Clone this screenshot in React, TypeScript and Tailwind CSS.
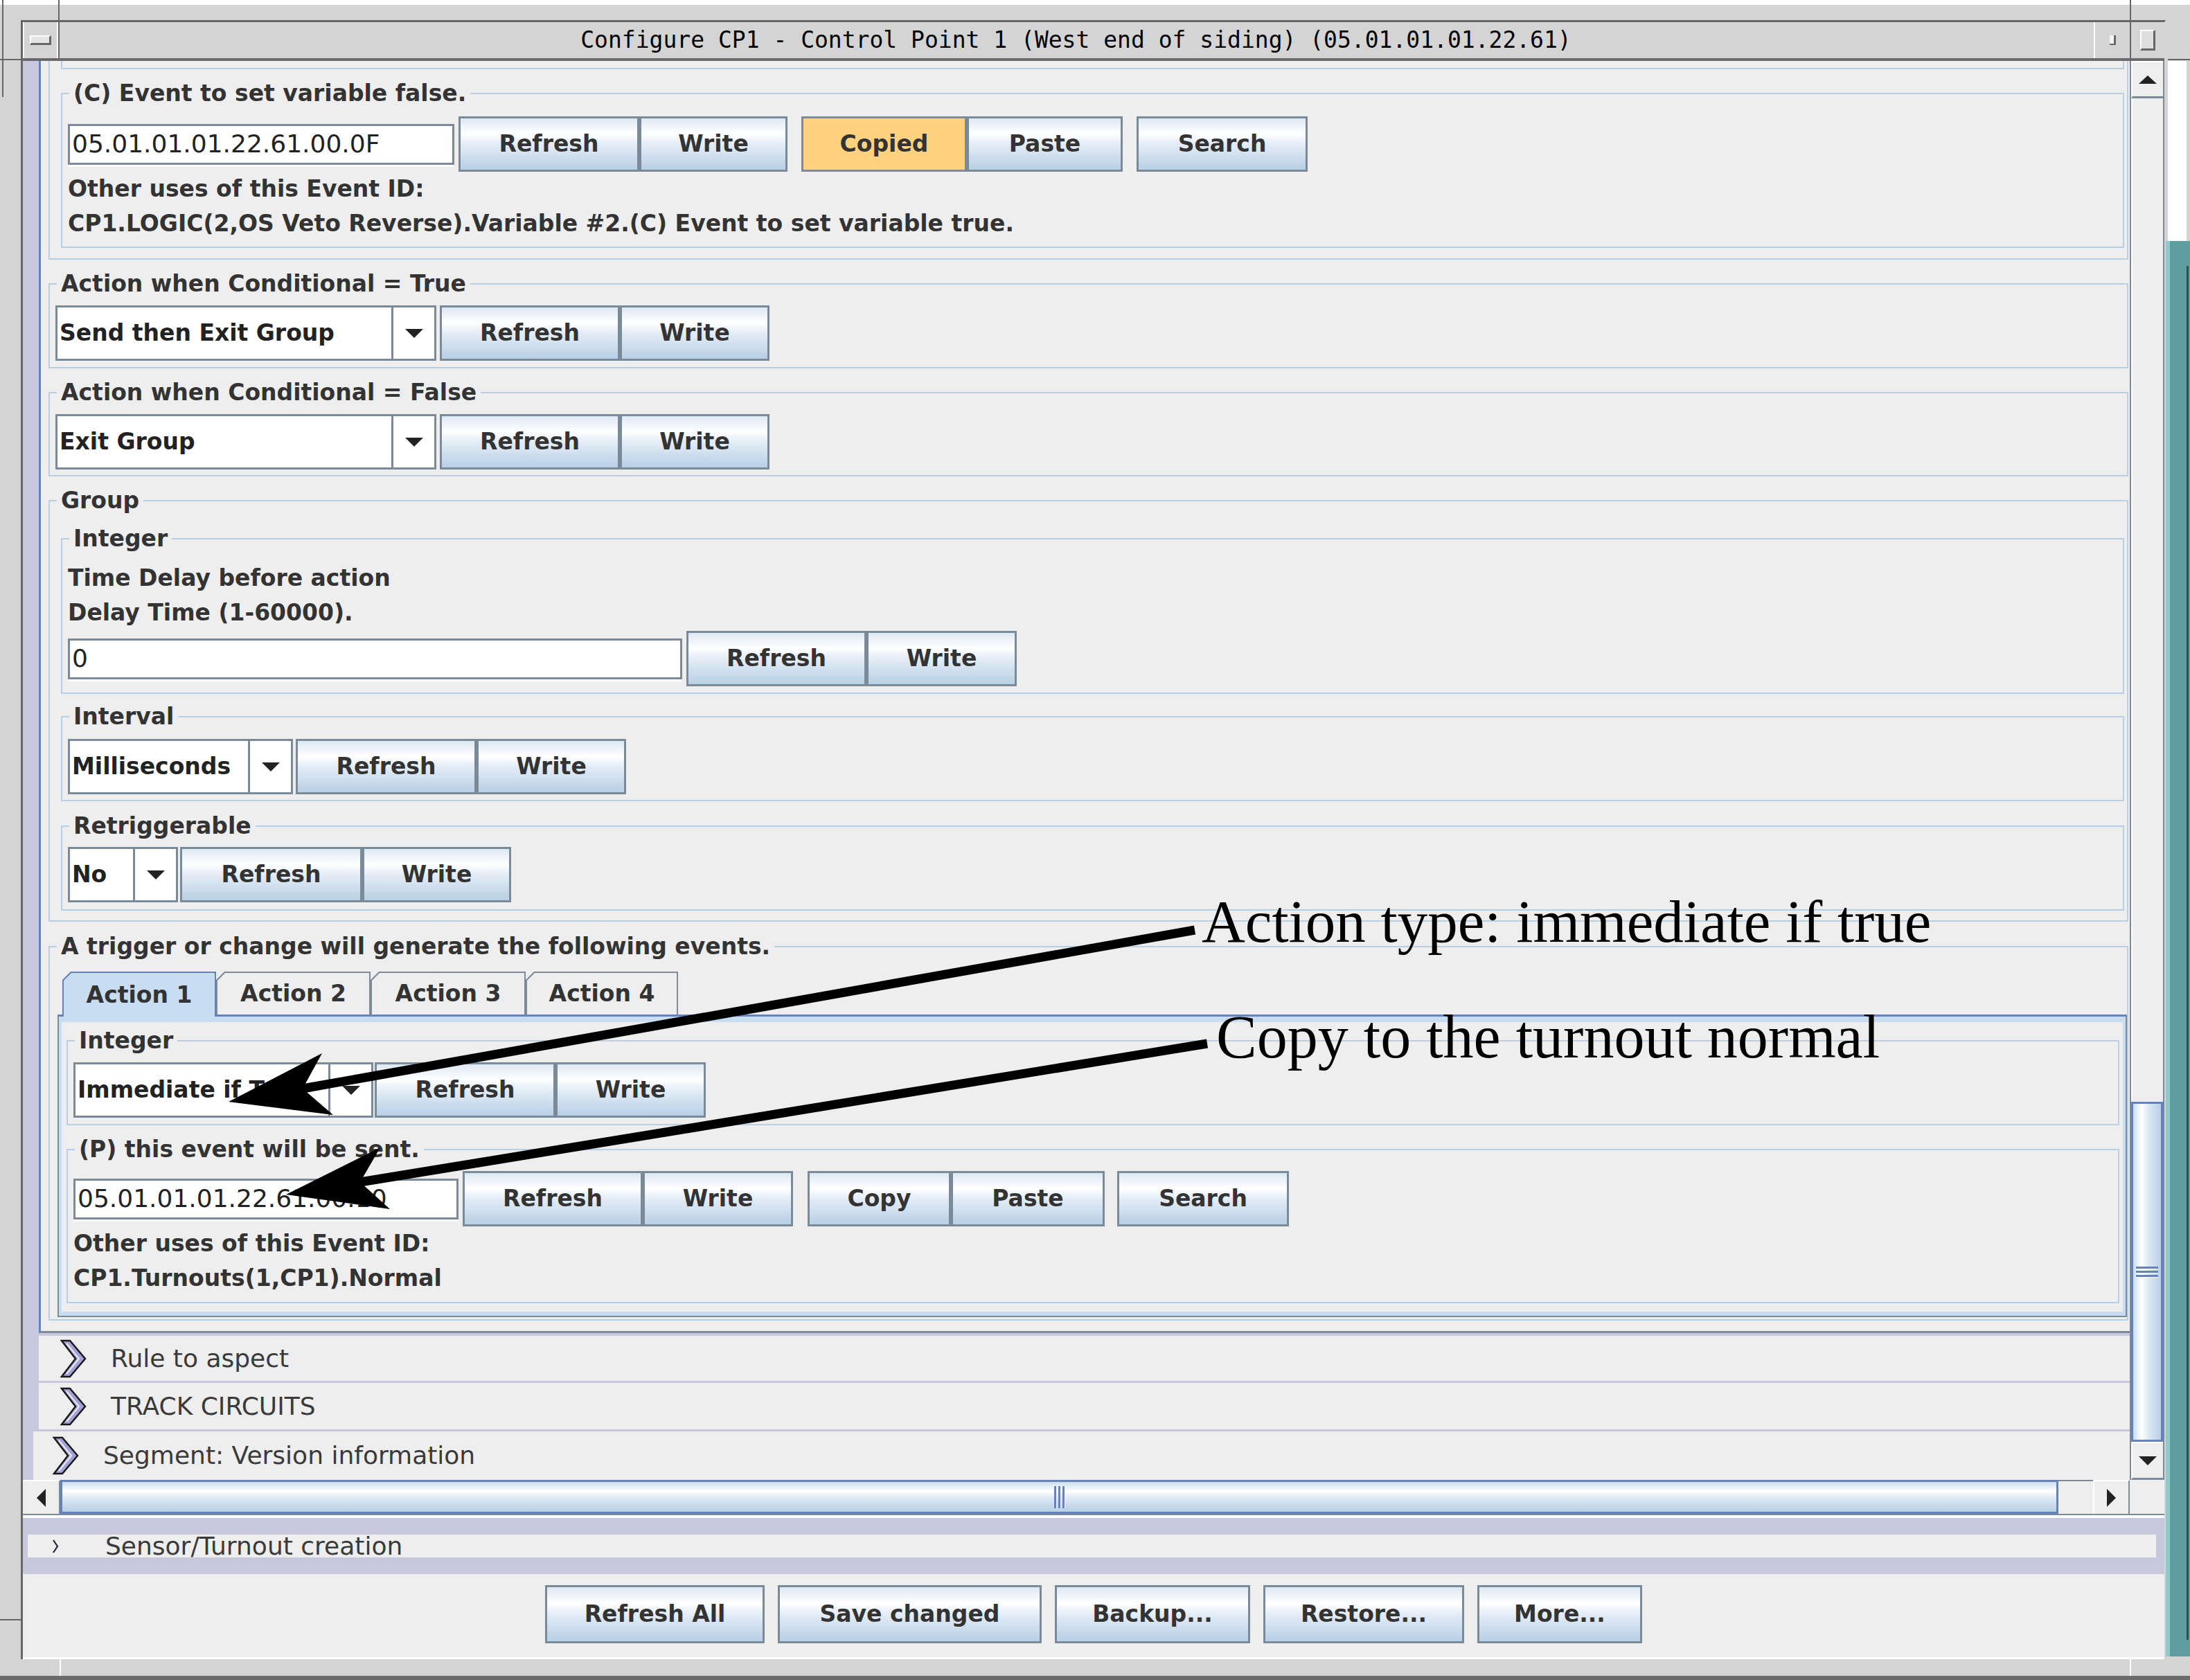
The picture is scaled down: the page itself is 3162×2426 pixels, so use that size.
import React from 'react';

// Ocean (Metal) look: gradient buttons, light blue titled borders
const BTN = 'bg-[linear-gradient(to_bottom,#dde8f3_0%,#ffffff_30%,#e6eef7_48%,#b8cfe5_100%)]';

type BtnProps = { label: string; w: string; hot?: boolean; h?: string; className?: string };

function Btn({ label, w, hot, h = 'h-[80px]', className = '' }: BtnProps) {
  return (
    <div
      className={`${w} ${h} ${className} shrink-0 flex items-center justify-center border-[3px] border-[#7a8a99] text-[33px] font-bold text-[#333] whitespace-nowrap ${hot ? 'bg-[#ffd280]' : BTN}`}
    >
      {label}
    </div>
  );
}

const TriDown = () => (
  <svg width="26" height="13" viewBox="0 0 26 13">
    <path d="M0 0H26L13 13Z" fill="#222" />
  </svg>
);

function Field({ value, w }: { value: string; w: string }) {
  return (
    <div
      className={`${w} h-[59px] shrink-0 flex items-center bg-white border-[3px] border-[#7a8a99] pl-[3px] text-[36px] text-[#222] whitespace-nowrap overflow-hidden shadow-[0_3px_0_#ffffff]`}
    >
      {value}
    </div>
  );
}

function Combo({ value, w }: { value: string; w: string }) {
  return (
    <div className={`${w} h-[80px] shrink-0 flex border-[3px] border-[#7a8a99] bg-white`}>
      <div className="flex-1 min-w-0 flex items-center pl-[3px] text-[33px] font-bold text-[#222] whitespace-nowrap overflow-hidden border-r-[3px] border-[#7a8a99]">
        {value}
      </div>
      <div className="w-[59px] shrink-0 flex items-center justify-center">
        <TriDown />
      </div>
    </div>
  );
}

function Group({ title, className = '', children }: { title: string; className?: string; children: React.ReactNode }) {
  return (
    <fieldset className={`min-w-0 border-2 border-[#b8cfe5] ${className}`}>
      <legend className="ml-[10px] px-[6px] text-[33px] leading-[36px] font-bold text-[#333] whitespace-nowrap">
        {title}
      </legend>
      {children}
    </fieldset>
  );
}

const Line = ({ children }: { children: React.ReactNode }) => (
  <div className="text-[33px] leading-[50px] font-bold text-[#333] whitespace-nowrap">{children}</div>
);

function Tab({ label, active, w }: { label: string; active?: boolean; w: string }) {
  return (
    <div
      className={`${w} ${active ? 'h-[65px] bg-[#6382bf]' : 'h-[62px] mb-[3px] bg-[#7a8a99]'} shrink-0 pt-[2px] px-[2px] [clip-path:polygon(12px_0,100%_0,100%_100%,0_100%,0_12px)]`}
    >
      <div
        className={`h-full flex items-center justify-center text-[33px] font-bold text-[#333] ${active ? 'bg-[#c8ddf2]' : 'bg-[#eeeeee]'} [clip-path:polygon(11px_0,100%_0,100%_100%,0_100%,0_11px)]`}
      >
        {label}
      </div>
    </div>
  );
}

const Chevron = () => (
  <svg width="38" height="56" viewBox="0 0 38 56" className="shrink-0">
    <path d="M2 2 L14 2 L36 28 L14 54 L2 54 L22 28 Z" fill="#a2a2d6" stroke="#1a1a1a" strokeWidth="2.5" />
    <path d="M9 6 L27 28 L9 50" fill="none" stroke="#e8e8f6" strokeWidth="2" />
  </svg>
);

function SectionRow({ label, className }: { label: string; className: string }) {
  return (
    <div className={`bg-[#eeeeee] flex items-center ${className}`}>
      <Chevron />
      <span className="ml-[35px] text-[36px] text-[#3a3a3a] whitespace-nowrap">{label}</span>
    </div>
  );
}

const Grip = () => (
  <div className="flex flex-col gap-[3px]">
    <div className="w-[32px] h-[3px] bg-[#6382bf] shadow-[0_1px_0_#ffffff]" />
    <div className="w-[32px] h-[3px] bg-[#6382bf] shadow-[0_1px_0_#ffffff]" />
    <div className="w-[32px] h-[3px] bg-[#6382bf] shadow-[0_1px_0_#ffffff]" />
  </div>
);

const VGrip = () => (
  <div className="flex gap-[3px]">
    <div className="w-[3px] h-[32px] bg-[#6382bf] shadow-[1px_0_0_#ffffff]" />
    <div className="w-[3px] h-[32px] bg-[#6382bf] shadow-[1px_0_0_#ffffff]" />
    <div className="w-[3px] h-[32px] bg-[#6382bf] shadow-[1px_0_0_#ffffff]" />
  </div>
);

function VScroll() {
  return (
    <div className="w-[50px] shrink-0 flex flex-col bg-[#eeeeee] border-l-2 border-r-2 border-[#7a8a99]">
      <div className="h-[54px] shrink-0 flex items-center justify-center border-t-2 border-l-2 border-white border-b-[3px] border-b-[#7a8a99]">
        <svg width="26" height="12" viewBox="0 0 26 12">
          <path d="M0 12H26L13 0Z" fill="#222" />
        </svg>
      </div>
      <div className="flex-1 border-l-2 border-white" />
      <div className="h-[491px] shrink-0 flex items-center justify-center border-[3px] border-[#6382bf] bg-[linear-gradient(to_right,#c8ddf2_0%,#ffffff_30%,#dde8f3_55%,#b8cfe5_100%)]">
        <Grip />
      </div>
      <div className="h-[55px] shrink-0 flex items-center justify-center border-t-2 border-l-2 border-white border-b-[3px] border-b-[#7a8a99]">
        <TriDown />
      </div>
    </div>
  );
}

function HScroll() {
  return (
    <div className="h-[51px] shrink-0 flex bg-[#eeeeee] border-b-2 border-[#7a8a99]">
      <div className="w-[54px] shrink-0 flex items-center justify-center border-t-2 border-white border-r-2 border-r-[#7a8a99]">
        <svg width="13" height="26" viewBox="0 0 13 26">
          <path d="M13 0V26L0 13Z" fill="#222" />
        </svg>
      </div>
      <div className="w-[2885px] shrink-0 flex items-center justify-center border-[3px] border-[#6382bf] bg-[linear-gradient(to_bottom,#c8ddf2_0%,#ffffff_30%,#dde8f3_55%,#b8cfe5_100%)]">
        <VGrip />
      </div>
      <div className="w-[50px] shrink-0 border-t-2 border-[#7a8a99]" />
      <div className="w-[53px] shrink-0 flex items-center justify-center border-t-2 border-l-2 border-white border-r-2 border-r-[#7a8a99]">
        <svg width="13" height="26" viewBox="0 0 13 26">
          <path d="M0 0V26L13 13Z" fill="#222" />
        </svg>
      </div>
      <div className="w-[50px] shrink-0" />
    </div>
  );
}

function TitleBar() {
  return (
    <div className="h-[56px] shrink-0 flex bg-[#d4d4d4] border-b-[4px] border-[#6b6b6b]">
      <div className="w-[51px] shrink-0 flex items-center justify-center border-l-2 border-r-2 border-white">
        <div className="w-[31px] h-[14px] bg-[#e4e4e4] border-t-2 border-l-2 border-white border-b-[3px] border-r-[3px] border-b-[#666] border-r-[#666]" />
      </div>
      <div className="flex-1 flex items-center justify-center font-['DejaVu_Sans_Mono',monospace] text-[33px] text-black whitespace-pre">
        Configure CP1 - Control Point 1 (West end of siding) (05.01.01.01.22.61)
      </div>
      <div className="w-[52px] shrink-0 flex items-center justify-center border-l-2 border-white">
        <div className="w-[9px] h-[14px] bg-[#f4f4f4] border-r-[3px] border-b-2 border-[#666]" />
      </div>
      <div className="w-[50px] shrink-0 flex items-center justify-center border-l-2 border-white">
        <div className="w-[22px] h-[30px] bg-[#dedede] border-t-2 border-l-2 border-white border-b-[3px] border-r-[3px] border-b-[#666] border-r-[#666]" />
      </div>
    </div>
  );
}

function Viewport() {
  return (
    <div className="flex-1 min-w-0 overflow-hidden bg-[#c8c8dc] flex flex-col pl-[23px]">
      {/* expanded logic section, scrolled so its top is cut */}
      <div className="flex flex-col bg-[#eeeeee] border-l-[3px] border-[#6382bf] border-b-[3px] border-b-[#7a8a99] pl-[11px] pr-[2px] pb-[15px]">
        <div className="border-x-2 border-b-2 border-[#b8cfe5] pl-[16px] pr-[4px] pb-[15px]">
          <div className="h-[12px] border-x-2 border-b-2 border-[#b8cfe5]" />
          <Group title="(C) Event to set variable false." className="mt-[17px]">
            <div className="pl-[8px] pt-[15px] pb-[8px]">
              <div className="flex items-center">
                <Field value="05.01.01.01.22.61.00.0F" w="w-[558px]" />
                <Btn label="Refresh" w="w-[261px]" className="ml-[6px]" />
                <Btn label="Write" w="w-[214px]" />
                <Btn label="Copied" w="w-[239px]" hot className="ml-[20px]" />
                <Btn label="Paste" w="w-[225px]" />
                <Btn label="Search" w="w-[247px]" className="ml-[20px]" />
              </div>
              <Line>Other uses of this Event ID:</Line>
              <Line>CP1.LOGIC(2,OS Veto Reverse).Variable #2.(C) Event to set variable true.</Line>
            </div>
          </Group>
        </div>

        <Group title="Action when Conditional = True" className="mt-[17px]">
          <div className="pl-[8px] pt-[13px] pb-[9px] flex items-center">
            <Combo value="Send then Exit Group" w="w-[550px]" />
            <Btn label="Refresh" w="w-[260px]" className="ml-[5px]" />
            <Btn label="Write" w="w-[216px]" />
          </div>
        </Group>

        <Group title="Action when Conditional = False" className="mt-[17px]">
          <div className="pl-[8px] pt-[13px] pb-[8px] flex items-center">
            <Combo value="Exit Group" w="w-[550px]" />
            <Btn label="Refresh" w="w-[260px]" className="ml-[5px]" />
            <Btn label="Write" w="w-[216px]" />
          </div>
        </Group>

        <Group title="Group" className="mt-[17px]">
          <div className="pl-[16px] pr-[4px] pt-[19px] pb-[14px]">
            <Group title="Integer">
              <div className="pl-[8px] pt-[14px] pb-[9px]">
                <Line>Time Delay before action</Line>
                <Line>Delay Time (1-60000).</Line>
                <div className="mt-[1px] flex items-center">
                  <Field value="0" w="w-[887px]" />
                  <Btn label="Refresh" w="w-[260px]" className="ml-[6px]" />
                  <Btn label="Write" w="w-[217px]" />
                </div>
              </div>
            </Group>
            <Group title="Interval" className="mt-[15px]">
              <div className="pl-[8px] pt-[14px] pb-[8px] flex items-center">
                <Combo value="Milliseconds" w="w-[325px]" />
                <Btn label="Refresh" w="w-[261px]" className="ml-[4px]" />
                <Btn label="Write" w="w-[216px]" />
              </div>
            </Group>
            <Group title="Retriggerable" className="mt-[18px]">
              <div className="pl-[8px] pt-[12px] pb-[10px] flex items-center">
                <Combo value="No" w="w-[159px]" />
                <Btn label="Refresh" w="w-[263px]" className="ml-[3px]" />
                <Btn label="Write" w="w-[215px]" />
              </div>
            </Group>
          </div>
        </Group>

        <Group title="A trigger or change will generate the following events." className="mt-[18px]">
          <div className="pl-[11px] pt-[18px] pb-[3px]">
            <div className="relative z-10 -mb-[3px] ml-[7px] flex items-end">
              <Tab label="Action 1" w="w-[222px]" active />
              <Tab label="Action 2" w="w-[223px]" />
              <Tab label="Action 3" w="w-[224px]" />
              <Tab label="Action 4" w="w-[220px]" />
            </div>
            <div className="border-t-[3px] border-x-2 border-b-2 border-[#7a8a99] border-t-[#6382bf] bg-[#c8ddf2] px-[4px] pt-[8px] pb-[6px]">
              <div className="bg-[#eeeeee] pl-[7px] pr-[5px] pt-[9px] pb-[12px]">
                <Group title="Integer">
                  <div className="pl-[8px] pt-[13px] pb-[9px] flex items-center">
                    <Combo value="Immediate if True" w="w-[433px]" />
                    <Btn label="Refresh" w="w-[261px]" className="ml-[2px]" />
                    <Btn label="Write" w="w-[217px]" />
                  </div>
                </Group>
                <Group title="(P) this event will be sent." className="mt-[17px]">
                  <div className="pl-[8px] pt-[13px] pb-[9px]">
                    <div className="flex items-center">
                      <Field value="05.01.01.01.22.61.00.10" w="w-[556px]" />
                      <Btn label="Refresh" w="w-[260px]" className="ml-[6px]" />
                      <Btn label="Write" w="w-[217px]" />
                      <Btn label="Copy" w="w-[207px]" className="ml-[21px]" />
                      <Btn label="Paste" w="w-[222px]" />
                      <Btn label="Search" w="w-[248px]" className="ml-[18px]" />
                    </div>
                    <Line>Other uses of this Event ID:</Line>
                    <Line>CP1.Turnouts(1,CP1).Normal</Line>
                  </div>
                </Group>
              </div>
            </div>
          </div>
        </Group>
      </div>

      <SectionRow label="Rule to aspect" className="mt-[4px] h-[65px] pl-[31px]" />
      <SectionRow label="TRACK CIRCUITS" className="mt-[3px] h-[67px] pl-[31px]" />
      <SectionRow label="Segment: Version information" className="mt-[3px] -ml-[8px] h-[70px] pl-[28px]" />
    </div>
  );
}

export default function App() {
  return (
    <div className="relative w-[3162px] h-[2426px] overflow-hidden bg-[#d4d4d4] font-['DejaVu_Sans',sans-serif]">
      <div className="h-[7px] bg-white" />

      {/* configuration window */}
      <div className="ml-[30px] mt-[22px] w-[3097px] flex flex-col border-t-[3px] border-l-[3px] border-r-[2px] border-[#666] border-r-[#d4d4d4]">
        <TitleBar />
        <div className="flex flex-col bg-[#eeeeee]">
          <div className="h-[2049px] flex">
            <Viewport />
            <VScroll />
          </div>
          <HScroll />
          <div className="h-[4px] bg-white" />
          <div className="h-[81px] bg-[#c8c8dc] pt-[24px] pl-[7px] pr-[12px]">
            <div className="h-[33px] bg-[#eeeeee] flex items-center pl-[35px]">
              <svg width="10" height="24" viewBox="0 0 10 24">
                <path d="M2 3 L8 12 L2 21" fill="none" stroke="#223" strokeWidth="2.2" />
              </svg>
              <span className="ml-[67px] text-[36px] leading-[33px] text-[#3a3a3a] whitespace-nowrap">Sensor/Turnout creation</span>
            </div>
          </div>
          <div className="h-[120px] flex justify-center gap-[19px] pt-[16px]">
            <Btn label="Refresh All" w="w-[317px]" h="h-[84px]" />
            <Btn label="Save changed" w="w-[381px]" h="h-[84px]" />
            <Btn label="Backup..." w="w-[282px]" h="h-[84px]" />
            <Btn label="Restore..." w="w-[290px]" h="h-[84px]" />
            <Btn label="More..." w="w-[238px]" h="h-[84px]" />
          </div>
          <div className="h-[3px] bg-white" />
        </div>
      </div>

      {/* other desktop windows peeking out */}
      <div className="absolute left-[3px] top-0 w-[2px] h-[140px] bg-[#666]" />
      <div className="absolute left-0 top-[85px] w-[86px] h-[2px] bg-[#666]" />
      <div className="absolute left-[84px] top-0 w-[2px] h-[87px] bg-[#666]" />
      <div className="absolute left-[3075px] top-0 w-[2px] h-[87px] bg-[#666]" />
      <div className="absolute left-[3130px] top-[85px] w-[32px] h-[2px] bg-[#666]" />
      <div className="absolute left-[3130px] top-[88px] w-[27px] h-[260px] bg-white" />
      <div className="absolute left-[3127px] top-[348px] w-[35px] h-[2044px] bg-[#5f9ea0] border-l-[6px] border-[#8fcbcb]" />
      <div className="absolute left-[3157px] top-[384px] w-[3px] h-[1984px] bg-[#2f4f4f]" />
      <div className="absolute left-0 top-[2338px] w-[32px] h-[2px] bg-[#666]" />
      <div className="absolute left-[86px] top-[2396px] w-[2px] h-[24px] bg-white" />
      <div className="absolute left-[3075px] top-[2396px] w-[2px] h-[24px] bg-white" />
      <div className="absolute left-0 top-[2420px] w-[3162px] h-[6px] bg-[#6b6b6b]" />

      {/* annotations */}
      <svg className="absolute left-0 top-0 pointer-events-none" width="3162" height="2426">
        <line x1="1725" y1="1343" x2="437" y2="1572" stroke="#000" strokeWidth="13" />
        <polygon points="330,1591 465,1521 437,1572 481,1610" fill="#000" />
        <line x1="1743" y1="1507" x2="520" y2="1707" stroke="#000" strokeWidth="13" />
        <polygon points="413,1725 549,1657 520,1707 563,1746" fill="#000" />
      </svg>
      <div className="absolute left-[1735px] top-[1287px] font-['Liberation_Serif',serif] text-[87px] leading-none text-black whitespace-nowrap">
        Action type: immediate if true
      </div>
      <div className="absolute left-[1756px] top-[1454px] font-['Liberation_Serif',serif] text-[88px] leading-none text-black whitespace-nowrap">
        Copy to the turnout normal
      </div>
    </div>
  );
}
